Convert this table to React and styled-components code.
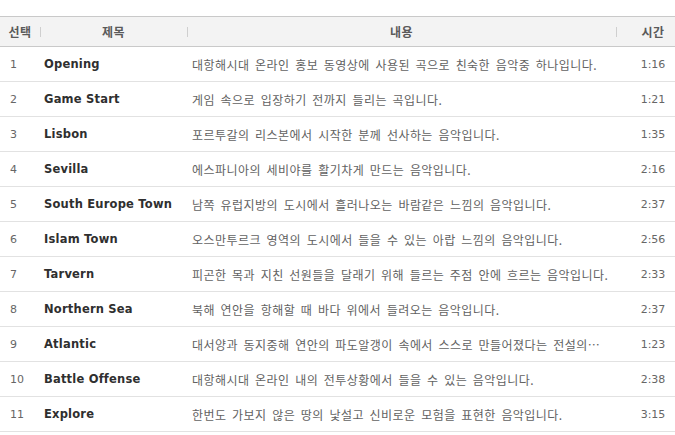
import React from "react";
import styled, { createGlobalStyle } from "styled-components";

const Global = createGlobalStyle`
  html, body { margin: 0; padding: 0; background: #fff; overflow: hidden; }
  body { font-family: "Noto Sans CJK KR", "DejaVu Sans", sans-serif; }
`;

const Page = styled.div`
  padding-top: 16px;
  width: 690px;
`;

const cols = "40px 147px 429px 74px";

const Header = styled.div`
  display: grid;
  grid-template-columns: ${cols};
  height: 29px;
  background: #f3f3f3;
  border-top: 1px solid #c9c9c9;
  border-bottom: 1px solid #c9c9c9;
`;

const HeadCell = styled.div`
  position: relative;
  display: flex;
  align-items: center;
  justify-content: center;
  font-size: 12px;
  font-weight: bold;
  color: #5a5a5a;
  letter-spacing: 0.5px;
  ${(p) =>
    p.$sep &&
    `&::before {
      content: "";
      position: absolute;
      left: 0;
      top: 10px;
      height: 10px;
      width: 1px;
      background: #cfcfcf;
    }`}
`;

const Row = styled.div`
  display: grid;
  grid-template-columns: ${cols};
  height: 34px;
  border-bottom: 1px solid #e2e2e2;
  align-items: center;
`;

const Num = styled.div`
  padding-left: 10px;
  font-family: "DejaVu Sans", sans-serif;
  font-size: 11px;
  color: #666;
`;

const Title = styled.div`
  padding-left: 4px;
  font-family: "DejaVu Sans", sans-serif;
  font-size: 11.5px;
  font-weight: bold;
  color: #2f2f2f;
  letter-spacing: 0.2px;
  white-space: nowrap;
`;

const Desc = styled.div`
  padding-left: 5px;
  padding-right: 3px;
  font-family: "Noto Sans CJK KR", sans-serif;
  font-size: 12px;
  color: #626262;
  white-space: nowrap;
  overflow: hidden;
  text-overflow: ellipsis;
  letter-spacing: 0.45px;
  word-spacing: 2.5px;
`;

const Time = styled.div`
  text-align: center;
  font-family: "DejaVu Sans", sans-serif;
  font-size: 11px;
  color: #666;
`;

const data = [
  ["Opening", "대항해시대 온라인 홍보 동영상에 사용된 곡으로 친숙한 음악중 하나입니다.", "1:16"],
  ["Game Start", "게임 속으로 입장하기 전까지 들리는 곡입니다.", "1:21"],
  ["Lisbon", "포르투갈의 리스본에서 시작한 분께 선사하는 음악입니다.", "1:35"],
  ["Sevilla", "에스파니아의 세비야를 활기차게 만드는 음악입니다.", "2:16"],
  ["South Europe Town", "남쪽 유럽지방의 도시에서 흘러나오는 바람같은 느낌의 음악입니다.", "2:37"],
  ["Islam Town", "오스만투르크 영역의 도시에서 들을 수 있는 아랍 느낌의 음악입니다.", "2:56"],
  ["Tarvern", "피곤한 목과 지친 선원들을 달래기 위해 들르는 주점 안에 흐르는 음악입니다.", "2:33"],
  ["Northern Sea", "북해 연안을 항해할 때 바다 위에서 들려오는 음악입니다.", "2:37"],
  ["Atlantic", "대서양과 동지중해 연안의 파도알갱이 속에서 스스로 만들어졌다는 전설의…", "1:23"],
  ["Battle Offense", "대항해시대 온라인 내의 전투상황에서 들을 수 있는 음악입니다.", "2:38"],
  ["Explore", "한번도 가보지 않은 땅의 낯설고 신비로운 모험을 표현한 음악입니다.", "3:15"],
];

export default function App() {
  return (
    <>
      <Global />
      <Page>
        <Header>
          <HeadCell>선택</HeadCell>
          <HeadCell $sep>제목</HeadCell>
          <HeadCell $sep>내용</HeadCell>
          <HeadCell $sep>시간</HeadCell>
        </Header>
        {data.map(([t, d, tm], i) => (
          <Row key={i}>
            <Num>{i + 1}</Num>
            <Title>{t}</Title>
            <Desc>{d}</Desc>
            <Time>{tm}</Time>
          </Row>
        ))}
      </Page>
    </>
  );
}
